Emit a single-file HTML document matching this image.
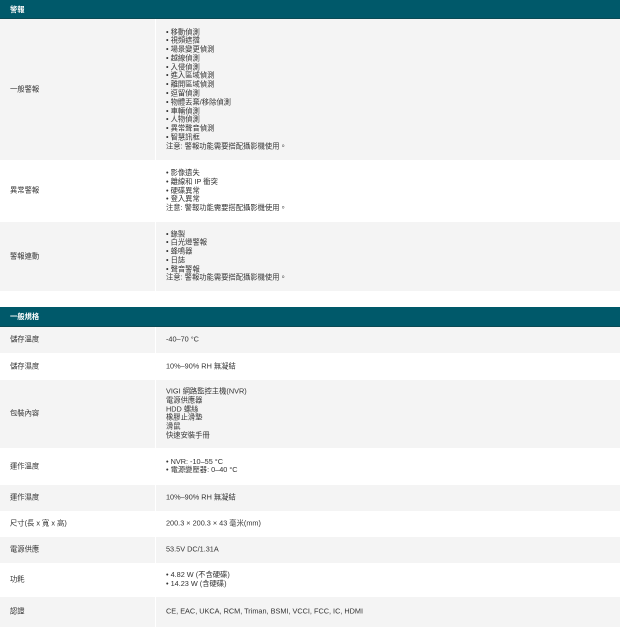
<!DOCTYPE html>
<html><head><meta charset="utf-8"><style>
*{margin:0;padding:0;box-sizing:border-box}
body{width:620px;height:620px;overflow:hidden;background:#fff;font-family:"Liberation Sans","Noto Sans CJK TC",sans-serif;font-size:7.3px;color:#333;position:relative}
.h{position:absolute;left:0;width:620px;height:19px;background:#00596a;color:#fff;font-weight:bold;font-size:7.3px;padding-left:10px;line-height:19px;border-bottom:1px solid #0a4a55}
.r{position:absolute;left:0;width:620px}
.g{background:#f4f4f4}
.g:after{content:"";position:absolute;left:155px;top:0;bottom:0;width:1px;background:#fff}
.l{position:absolute;left:10px;top:50%;transform:translateY(-50%);line-height:8.8px}
.v{position:absolute;left:166px;top:50%;transform:translateY(-50%);line-height:8.8px}
</style></head><body>
<div class="h" style="top:0">警報</div>
<div class="r g" style="top:19px;height:141px"><div class="l">一般警報</div><div class="v">• 移動偵測<br>• 視頻遮擋<br>• 場景變更偵測<br>• 越線偵測<br>• 入侵偵測<br>• 進入區域偵測<br>• 離開區域偵測<br>• 逗留偵測<br>• 物體丟棄/移除偵測<br>• 車輛偵測<br>• 人物偵測<br>• 異常聲音偵測<br>• 智慧訊框<br>注意: 警報功能需要搭配攝影機使用。</div></div>
<div class="r" style="top:160px;height:62px"><div class="l">異常警報</div><div class="v">• 影像遺失<br>• 離線和 IP 衝突<br>• 硬碟異常<br>• 登入異常<br>注意: 警報功能需要搭配攝影機使用。</div></div>
<div class="r g" style="top:222px;height:69px"><div class="l">警報連動</div><div class="v">• 錄製<br>• 白光燈警報<br>• 蜂鳴器<br>• 日誌<br>• 聲音警報<br>注意: 警報功能需要搭配攝影機使用。</div></div>
<div class="h" style="top:307px;height:20px">一般規格</div>
<div class="r g" style="top:327px;height:26px"><div class="l">儲存溫度</div><div class="v">-40–70 °C</div></div>
<div class="r" style="top:353px;height:27px"><div class="l">儲存濕度</div><div class="v">10%–90% RH 無凝結</div></div>
<div class="r g" style="top:380px;height:68px"><div class="l">包裝內容</div><div class="v">VIGI 網路監控主機(NVR)<br>電源供應器<br>HDD 螺絲<br>橡膠止滑墊<br>滑鼠<br>快速安裝手冊</div></div>
<div class="r" style="top:448px;height:37px"><div class="l">運作溫度</div><div class="v">• NVR: -10–55 °C<br>• 電源變壓器: 0–40 °C</div></div>
<div class="r g" style="top:485px;height:26px"><div class="l">運作濕度</div><div class="v">10%–90% RH 無凝結</div></div>
<div class="r" style="top:511px;height:26px"><div class="l">尺寸(長 x 寬 x 高)</div><div class="v">200.3 × 200.3 × 43 毫米(mm)</div></div>
<div class="r g" style="top:537px;height:26px"><div class="l">電源供應</div><div class="v">53.5V DC/1.31A</div></div>
<div class="r" style="top:563px;height:34px"><div class="l">功耗</div><div class="v">• 4.82 W (不含硬碟)<br>• 14.23 W (含硬碟)</div></div>
<div class="r g" style="top:597px;height:30px"><div class="l" style="top:15px">認證</div><div class="v" style="top:15px">CE, EAC, UKCA, RCM, Triman, BSMI, VCCI, FCC, IC, HDMI</div></div>
</body></html>
